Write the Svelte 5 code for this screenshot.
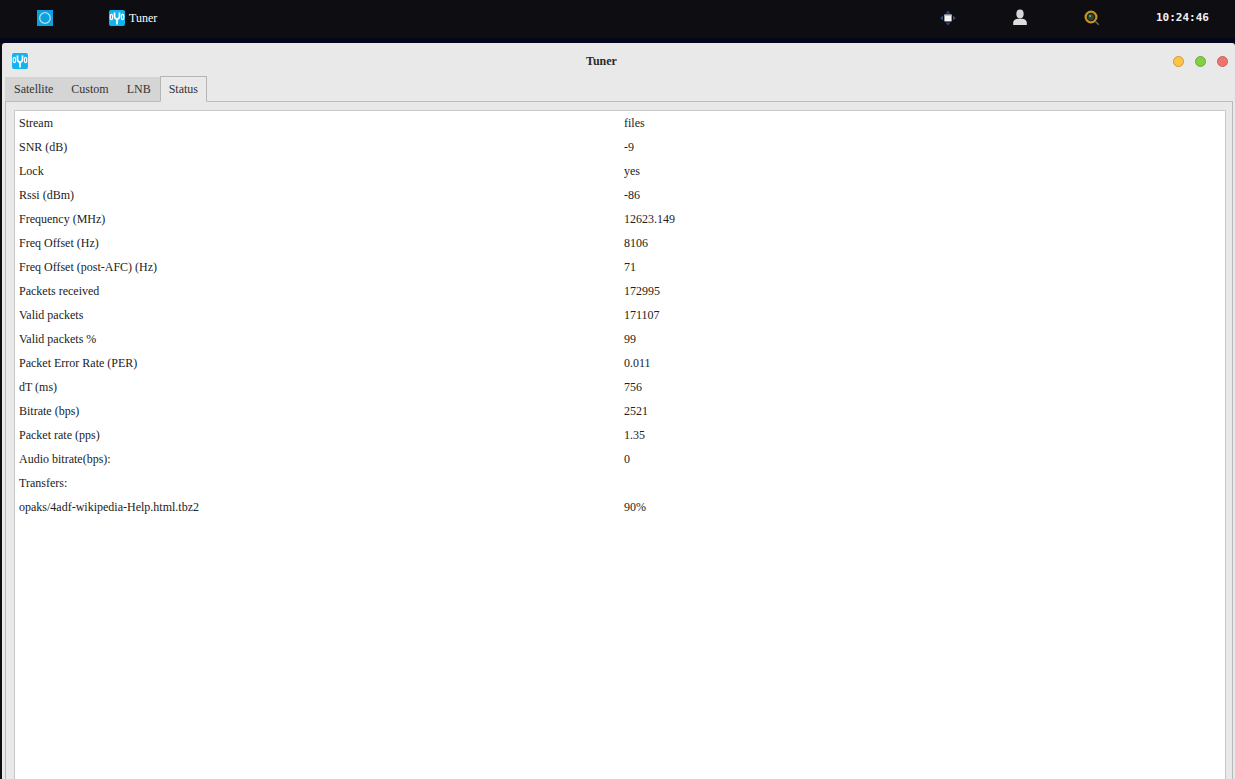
<script lang="ts">
  const rows: [string, string][] = [
    ["Stream", "files"],
    ["SNR (dB)", "-9"],
    ["Lock", "yes"],
    ["Rssi (dBm)", "-86"],
    ["Frequency (MHz)", "12623.149"],
    ["Freq Offset (Hz)", "8106"],
    ["Freq Offset (post-AFC) (Hz)", "71"],
    ["Packets received", "172995"],
    ["Valid packets", "171107"],
    ["Valid packets %", "99"],
    ["Packet Error Rate (PER)", "0.011"],
    ["dT (ms)", "756"],
    ["Bitrate (bps)", "2521"],
    ["Packet rate (pps)", "1.35"],
    ["Audio bitrate(bps):", "0"],
    ["Transfers:", ""],
    ["opaks/4adf-wikipedia-Help.html.tbz2", "90%"]
  ];
  const tabs = ["Satellite", "Custom", "LNB", "Status"];
</script>

{#snippet tunerIcon()}
  <svg width="16" height="16" viewBox="0 0 16 16">
    <rect width="16" height="16" rx="2" fill="#10b4ee" />
    <path d="M8 14.5V9M5.5 2.5v3.7q0 2.8 2.5 2.8t2.5-2.8V2.5" fill="none" stroke="#fff" stroke-width="1.7" />
    <ellipse cx="2.4" cy="7" rx="1.2" ry="2.7" fill="none" stroke="#fff" stroke-width="1.2" />
    <ellipse cx="13.6" cy="7" rx="1.2" ry="2.7" fill="none" stroke="#fff" stroke-width="1.2" />
  </svg>
{/snippet}

<div class="page">
  <header class="taskbar">
    <div class="bar-row">
      <span class="start">
        <svg width="16" height="16" viewBox="0 0 16 16">
          <rect width="16" height="16" fill="#0f9fdc" />
          <circle cx="8" cy="8" r="5.3" fill="none" stroke="#a5e4f8" stroke-width="1.3" />
        </svg>
      </span>
      <span class="task">
        {@render tunerIcon()}
        <span>Tuner</span>
      </span>
      <span class="tray tray-move">
        <svg width="16" height="16" viewBox="0 0 16 16">
          <path d="M8 .4 10.4 3.4H5.6zM8 15.6 5.6 12.6h4.8zM.2 8 3 5.6v4.8zM15.8 8 13 10.4V5.6z" fill="#34497f" />
          <rect x="4.4" y="4.6" width="7.2" height="6.8" fill="#f4f4f4" />
          <rect x="4.4" y="4.6" width="7.2" height="1.4" fill="#b9bfd0" />
        </svg>
      </span>
      <span class="tray tray-user">
        <svg width="16" height="17" viewBox="0 0 16 17">
          <ellipse cx="8" cy="5" rx="3.7" ry="4.4" fill="#d6d6d6" />
          <path d="M1.2 16v-2.6q0-2.6 4.3-3.6h5q4.3 1 4.3 3.6V16z" fill="#dcdcdc" />
        </svg>
      </span>
      <span class="tray tray-search">
        <svg width="17" height="17" viewBox="0 0 17 17">
          <circle cx="7" cy="7" r="5.4" fill="#14221a" stroke="#c8921f" stroke-width="2.2" />
          <circle cx="7" cy="7" r="3" fill="#2c4a2a" />
          <circle cx="6.2" cy="6" r="1" fill="#8fa488" />
          <path d="m11.4 11.4 3.4 3.4" stroke="#6e6b62" stroke-width="1.4" />
        </svg>
      </span>
      <span class="clock">10:24:46</span>
    </div>
    <div class="bar-edge"></div>
  </header>

  <section class="window">
    <div class="titlebar">
      <span class="win-icon">{@render tunerIcon()}</span>
      <strong>Tuner</strong>
      <div class="lights">
        <i class="yellow"></i>
        <i class="green"></i>
        <i class="red"></i>
      </div>
    </div>

    <div class="tabs">
      {#each tabs as tab}
        <span class="tab" class:active={tab === "Status"}>{tab}</span>
      {/each}
      <span class="tab-fill"></span>
    </div>

    <div class="panel">
      <div class="box">
        <table>
          <tbody>
            {#each rows as row}
              <tr>
                <td>{row[0]}</td>
                <td>{row[1]}</td>
              </tr>
            {/each}
          </tbody>
        </table>
      </div>
    </div>
  </section>
</div>

<style>
  :global(body) {
    margin: 0;
    overflow: hidden;
    background: #0d0d12;
  }

  .page {
    height: 779px;
    display: flex;
    flex-direction: column;
    overflow: hidden;
    font-family: "Liberation Serif", "Times New Roman", serif;
    font-size: 12px;
    color: #222;
  }

  .taskbar {
    height: 43px;
    flex: none;
    background: #0d0d12;
  }

  .bar-row {
    height: 38px;
    position: relative;
    display: flex;
    align-items: center;
    color: #fff;
  }

  .bar-edge {
    height: 5px;
    background: #05051c;
  }

  .start {
    display: flex;
    margin-left: 37px;
    margin-top: -2px;
  }

  .task {
    display: flex;
    align-items: center;
    gap: 4px;
    margin-left: 56px;
    margin-top: -2px;
  }

  .tray {
    position: absolute;
    top: 9px;
    display: flex;
  }

  .tray-move {
    left: 940px;
    top: 10px;
  }

  .tray-user {
    left: 1012px;
  }

  .tray-search {
    left: 1084px;
    top: 10px;
  }

  .clock {
    position: absolute;
    left: 1156px;
    top: 11px;
    font-family: "DejaVu Sans Mono", "Liberation Mono", monospace;
    font-size: 11px;
    font-weight: 700;
    line-height: 14px;
    color: #f2f2f2;
  }

  .window {
    flex: 1;
    min-height: 0;
    margin-left: 2px;
    padding: 0 2px 0 3px;
    background: #e9e9e9;
    display: flex;
    flex-direction: column;
    border-radius: 3px 3px 0 0;
  }

  .titlebar {
    height: 33px;
    flex: none;
    position: relative;
    display: flex;
    align-items: center;
    justify-content: center;
    padding-right: 35px;
  }

  .titlebar strong {
    margin-top: 3px;
    color: #2b2b2b;
  }

  .win-icon {
    position: absolute;
    left: 7px;
    top: 10px;
    display: flex;
  }

  .lights {
    position: absolute;
    right: 5px;
    top: 13px;
    display: flex;
    gap: 11px;
  }

  .lights i {
    width: 11px;
    height: 11px;
    box-sizing: border-box;
    border-radius: 50%;
    border: 1px solid;
  }

  .yellow {
    background: #fdc544;
    border-color: #c9973e !important;
  }

  .green {
    background: #85cf45;
    border-color: #6ea846 !important;
  }

  .red {
    background: #ef7470;
    border-color: #c46563 !important;
  }

  .tabs {
    height: 26px;
    flex: none;
    display: flex;
    margin-bottom: -1px;
    position: relative;
    z-index: 1;
  }

  .tab {
    margin-top: 1px;
    padding: 0 9px;
    line-height: 24px;
    background: #d5d5d5;
    color: #333;
    border-bottom: 1px solid #bdbdbd;
    box-sizing: border-box;
  }

  .tab.active {
    margin-top: 0;
    padding: 0 8px;
    background: #e9e9e9;
    border: 1px solid #b5b5b5;
    border-bottom-color: #e9e9e9;
  }

  .tab-fill {
    flex: 1;
    border-bottom: 1px solid #bdbdbd;
  }

  .panel {
    flex: 1;
    min-height: 0;
    display: flex;
    padding: 8px 6px 0 8px;
    border: 1px solid #b9b9b9;
    border-bottom: 0;
  }

  .box {
    flex: 1;
    min-width: 0;
    background: #fff;
    border: 1px solid #c8c8c8;
    border-bottom: 0;
    padding: 0 4px;
  }

  table {
    width: 100%;
    table-layout: fixed;
    border-collapse: collapse;
  }

  td {
    height: 24px;
    padding: 0;
    vertical-align: middle;
    line-height: 14px;
    white-space: nowrap;
  }

  td:first-child {
    width: 605px;
  }
</style>
